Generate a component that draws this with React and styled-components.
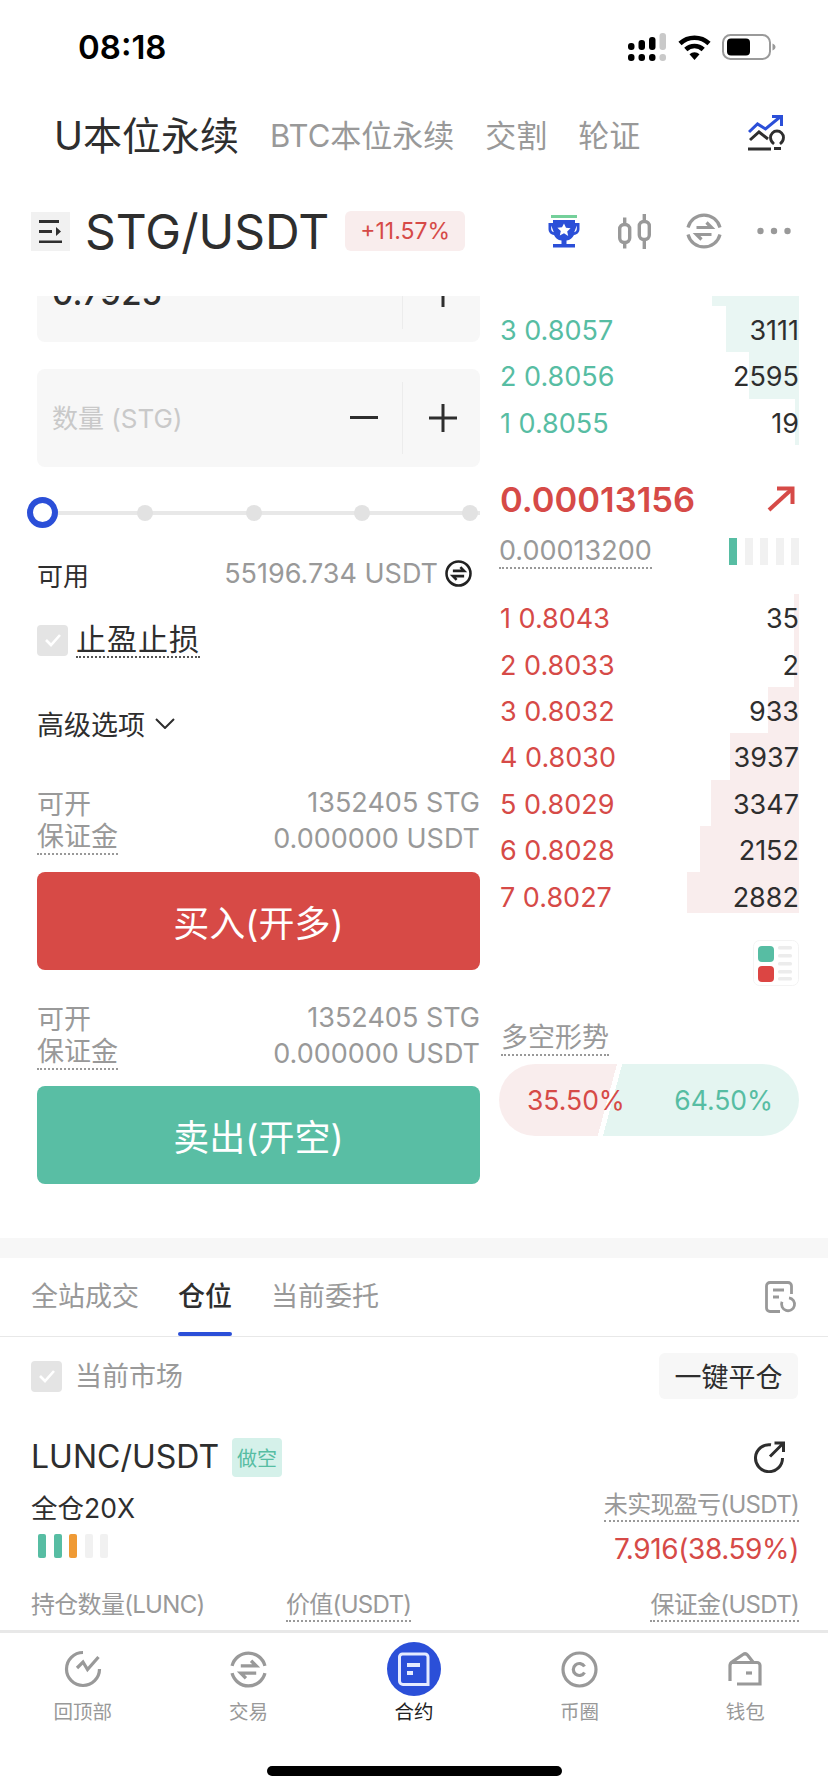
import React from "react";
import styled, { createGlobalStyle } from "styled-components";

const RED = "#d64a47";
const GREEN = "#57bda3";
const BLUE = "#2b4fd8";
const GREY = "#999999";
const DARK = "#2e2e2e";

const GlobalStyle = createGlobalStyle`
  body {
    margin: 0;
    background: #fff;
    font-family: Inter, "Noto Sans CJK SC", sans-serif;
    color: ${DARK};
  }
`;

const Page = styled.div`
  width: 828px;
  height: 1792px;
  display: flex;
  flex-direction: column;
  overflow: hidden;
  background: #fff;
`;

const StatusBar = styled.div`
  height: 94px;
  flex: none;
  display: flex;
  align-items: center;
  justify-content: space-between;
  padding: 0 52px 0 78px;
`;

const Clock = styled.span`
  font-size: 33px;
  font-weight: 600;
  color: #000;
`;

const StatusIcons = styled.div`
  display: flex;
  align-items: center;
  gap: 11px;
`;

const ProductTabs = styled.div`
  height: 78px;
  flex: none;
  display: flex;
  align-items: center;
  padding: 0 42px 0 54px;
`;

const ProductTab = styled.span`
  font-size: ${(p) => (p.$active ? "39px" : "31px")};
  font-weight: 400;
  color: ${(p) => (p.$active ? DARK : GREY)};
  margin-right: 31px;
  white-space: nowrap;
`;

const PushRight = styled.div`
  margin-left: auto;
  display: flex;
  align-items: center;
`;

const MarketBar = styled.div`
  height: 118px;
  margin-bottom: 6px;
  flex: none;
  display: flex;
  align-items: center;
  padding: 0 37px 0 31px;
`;

const MenuButton = styled.div`
  width: 39px;
  height: 39px;
  background: #f1f1f1;
  display: flex;
  align-items: center;
  justify-content: center;
`;

const Pair = styled.span`
  font-size: 48px;
  margin-left: 15px;
  color: ${DARK};
`;

const ChangeBadge = styled.span`
  height: 40px;
  width: 120px;
  margin-left: 16px;
  border-radius: 6px;
  background: #f9eded;
  color: ${RED};
  font-size: 23px;
  display: flex;
  align-items: center;
  justify-content: center;
`;

const MarketActions = styled.div`
  margin-left: auto;
  display: flex;
  align-items: center;
  gap: 35px;
`;

const TrophySlot = styled.span`
  display: flex;
  margin-right: 3px;
`;

const ScrollArea = styled.div`
  flex: 1;
  min-height: 0;
  overflow: hidden;
`;

const TradeGrid = styled.div`
  height: 942px;
  display: grid;
  grid-template-columns: 443px 300px;
  column-gap: 19px;
  padding-left: 37px;
`;

const OrderForm = styled.div`
  margin-top: -52px;
  display: flex;
  flex-direction: column;
`;

const InputBox = styled.div`
  height: 98px;
  flex: none;
  margin-bottom: ${(p) => (p.$last ? 0 : "27px")};
  display: flex;
  align-items: center;
  background: #f7f7f7;
  border-radius: 8px;
  padding-left: 15px;
`;

const InputText = styled.span`
  flex: 1;
  font-size: ${(p) => (p.$filled ? "33px" : "26px")};
  font-weight: ${(p) => (p.$filled ? 500 : 400)};
  padding-bottom: ${(p) => (p.$filled ? 0 : "3px")};
  color: ${(p) => (p.$filled ? DARK : "#c9c9c9")};
`;

const Stepper = styled.div`
  box-sizing: border-box;
  width: 78px;
  height: 72px;
  padding-left: 2px;
  display: flex;
  align-items: center;
  justify-content: center;
  border-left: ${(p) => (p.$divided ? "1px solid #ececec" : "none")};
`;

const Slider = styled.div`
  position: relative;
  margin: 30px 0 0 -10px;
  display: flex;
  align-items: center;
  gap: 92.3px;
  height: 31px;
  &::before {
    content: "";
    position: absolute;
    left: 16px;
    right: 0;
    top: 14px;
    height: 4px;
    background: #e8e8e8;
  }
`;

const SliderThumb = styled.span`
  position: relative;
  box-sizing: border-box;
  width: 31px;
  height: 31px;
  margin-right: -13px;
  border-radius: 50%;
  border: 6px solid ${BLUE};
  background: #fff;
`;

const SliderStop = styled.span`
  position: relative;
  width: 16px;
  height: 16px;
  border-radius: 50%;
  background: #e2e2e2;
`;

const AvailableRow = styled.div`
  height: 36px;
  margin-top: 27px;
  display: flex;
  align-items: center;
  justify-content: space-between;
`;

const AvailableLabel = styled.span`
  font-size: 26px;
  margin-top: 2px;
  color: ${DARK};
`;

const AvailableValue = styled.span`
  font-size: 27px;
  color: ${GREY};
  display: flex;
  align-items: center;
  gap: 7px;
  padding-right: 8px;
`;

const CheckRow = styled.div`
  display: flex;
  align-items: center;
  gap: ${(p) => p.$gap}px;
  margin-top: ${(p) => p.$top}px;
`;

const CheckBox = styled.span`
  width: 31px;
  height: 31px;
  border-radius: 4px;
  background: #e4e4e4;
  display: flex;
  align-items: center;
  justify-content: center;
`;

const StopLabel = styled.span`
  font-size: 30px;
  line-height: 34px;
  letter-spacing: 1px;
  border-bottom: 2px dotted #555;
  color: ${DARK};
`;

const AdvancedRow = styled.div`
  height: 36px;
  margin-top: 47px;
  display: flex;
  align-items: center;
  gap: 10px;
  font-size: 27px;
  color: ${DARK};
`;

const StatGroup = styled.div`
  margin: ${(p) => p.$top}px 0 ${(p) => p.$bottom}px;
`;

const StatRow = styled.div`
  height: 36px;
  display: flex;
  align-items: center;
  justify-content: space-between;
  font-size: 27px;
  color: ${GREY};
`;

const DottedLabel = styled.span`
  display: inline-block;
  line-height: ${(p) => p.$line || 32}px;
  border-bottom: 2px dotted ${(p) => (p.$plain ? "transparent" : GREY)};
`;

const ActionButton = styled.div`
  height: 98px;
  flex: none;
  border-radius: 8px;
  background: ${(p) => (p.$sell ? "#59bea4" : "#d74a46")};
  color: #fff;
  font-size: 36px;
  display: flex;
  align-items: center;
  justify-content: center;
`;

const BookColumn = styled.div`
  display: flex;
  flex-direction: column;
`;

const Levels = styled.div`
  height: ${(p) => p.$height}px;
  flex: none;
  overflow: hidden;
  display: flex;
  flex-direction: column;
  justify-content: ${(p) => (p.$bottom ? "flex-end" : "flex-start")};
`;

const Level = styled.div`
  position: relative;
  box-sizing: border-box;
  height: 46.4px;
  flex: none;
  display: flex;
  align-items: center;
  justify-content: space-between;
  font-size: 27px;
  padding: 3px 0 0 1px;
`;

const DepthBar = styled.span`
  position: absolute;
  top: 0;
  bottom: 0;
  right: 0;
  background: ${(p) => (p.$bid ? "#e9f6f3" : "#f9eded")};
`;

const LevelPrice = styled.span`
  position: relative;
  white-space: pre;
  color: ${(p) => (p.$bid ? GREEN : RED)};
`;

const LevelSize = styled.span`
  position: relative;
  color: ${DARK};
`;

const MidRow = styled.div`
  height: 44px;
  margin-top: 32px;
  padding: 0 4px 0 1px;
  display: flex;
  align-items: center;
  justify-content: space-between;
  font-size: 34.5px;
  font-weight: 600;
  color: ${RED};
`;

const MarkRow = styled.div`
  height: 35px;
  margin: 13px 0 25px;
  display: flex;
  align-items: center;
  justify-content: space-between;
  font-size: 27px;
  color: ${GREY};
`;

const RiskBars = styled.div`
  display: flex;
  gap: 7.5px;
  margin: ${(p) => p.$margin || 0};
`;

const RiskBar = styled.span`
  width: 8px;
  height: ${(p) => p.$height || 27}px;
  border-radius: ${(p) => (p.$round ? "2px" : 0)};
  background: ${(p) => p.$color || "#f1f1f1"};
`;

const LayoutToggle = styled.div`
  align-self: flex-end;
  margin-top: 27px;
  width: 46px;
  height: 46px;
`;

const SentimentTitle = styled.div`
  margin-top: 35px;
  padding-left: 2px;
  font-size: 27px;
  color: ${GREY};
`;

const SentimentPill = styled.div`
  margin-top: 8px;
  height: 72px;
  padding: 0 26px 0 28px;
  border-radius: 36px;
  display: flex;
  align-items: center;
  justify-content: space-between;
  font-size: 26.5px;
  background: linear-gradient(105deg, #f9eded 114px, #fff 114px, #fff 119px, #e4f5f1 119px);
`;

const SentimentValue = styled.span`
  color: ${(p) => (p.$long ? GREEN : RED)};
`;

const Divider = styled.div`
  height: 20px;
  background: #f7f7f7;
`;

const PositionTabs = styled.div`
  height: 78px;
  box-sizing: content-box;
  padding: 0 31px 0 31px;
  border-bottom: 1px solid #e8e8e8;
  display: flex;
  align-items: center;
  gap: 39px;
`;

const PositionTab = styled.span`
  position: relative;
  line-height: 78px;
  font-size: 27px;
  font-weight: ${(p) => (p.$active ? 500 : 400)};
  color: ${(p) => (p.$active ? DARK : GREY)};
  &::after {
    content: "";
    display: ${(p) => (p.$active ? "block" : "none")};
    position: absolute;
    left: 0;
    right: 0;
    bottom: 0;
    height: 4px;
    border-radius: 2px;
    background: ${BLUE};
  }
`;

const FilterRow = styled.div`
  margin-top: 16px;
  padding: 0 30px 0 31px;
  display: flex;
  align-items: center;
  justify-content: space-between;
`;

const FilterLabel = styled.span`
  font-size: 27px;
  padding-bottom: 3px;
  color: ${GREY};
`;

const CloseAll = styled.div`
  width: 139px;
  height: 46px;
  border-radius: 6px;
  background: #f7f7f7;
  font-size: 27px;
  padding-bottom: 1px;
  box-sizing: border-box;
  color: ${DARK};
  display: flex;
  align-items: center;
  justify-content: center;
`;

const PositionHead = styled.div`
  height: 40px;
  margin-top: 38px;
  padding: 0 43px 0 31px;
  display: flex;
  align-items: center;
  gap: 13px;
`;

const Symbol = styled.span`
  font-size: 32px;
  padding-bottom: 1px;
  color: ${DARK};
`;

const SideBadge = styled.span`
  width: 50px;
  height: 39px;
  border-radius: 4px;
  background: #d5f1ea;
  color: ${GREEN};
  font-size: 20px;
  display: flex;
  align-items: center;
  justify-content: center;
`;

const PositionMeta = styled.div`
  margin-top: 12px;
  padding: 0 29px 0 31px;
  display: flex;
  justify-content: space-between;
`;

const Leverage = styled.div`
  font-size: 26.5px;
  line-height: 36px;
  margin-top: 1px;
  color: ${DARK};
`;

const MetaRight = styled.div`
  text-align: right;
  font-size: 24px;
  letter-spacing: -0.7px;
  color: ${GREY};
`;

const Pnl = styled.div`
  font-size: 28px;
  letter-spacing: -0.4px;
  line-height: 36px;
  margin-top: 9px;
  color: ${RED};
`;

const MetricHeads = styled.div`
  margin-top: 22px;
  padding: 0 29px 0 31px;
  display: grid;
  grid-template-columns: 255px 1fr auto;
  font-size: 24px;
  letter-spacing: -0.7px;
  color: ${GREY};
`;

const BottomNav = styled.div`
  flex: none;
  height: 162px;
  box-sizing: border-box;
  border-top: 3px solid #e8e8e8;
  background: #fff;
  display: flex;
  flex-direction: column;
`;

const NavItems = styled.div`
  display: grid;
  grid-template-columns: repeat(5, 1fr);
  padding-top: 9px;
`;

const NavItem = styled.div`
  display: flex;
  flex-direction: column;
  align-items: center;
  font-size: 19.5px;
  line-height: 24px;
  color: ${(p) => (p.$active ? "#222" : GREY)};
`;

const NavIcon = styled.div`
  height: 54px;
  margin-bottom: 4px;
  display: flex;
  align-items: center;
  justify-content: center;
`;

const HomeBar = styled.div`
  width: 295px;
  height: 10px;
  margin: 42px auto 0;
  border-radius: 5px;
  background: #000;
`;

const SignalIcon = () => (
  <svg width="39" height="28" viewBox="0 0 39 28">
    <g fill="#000">
      <rect x="0" y="10" width="6.5" height="7" rx="3" />
      <rect x="10.5" y="7" width="6.5" height="10" rx="3" />
      <rect x="21" y="4" width="6.5" height="13" rx="3" />
      <rect x="0" y="21" width="6.5" height="7" rx="3" />
      <rect x="10.5" y="21" width="6.5" height="7" rx="3" />
      <rect x="21" y="21" width="6.5" height="7" rx="3" />
    </g>
    <g fill="#c9c9c9">
      <rect x="31.5" y="0" width="6.5" height="17" rx="3" />
      <rect x="31.5" y="21" width="6.5" height="7" rx="3" />
    </g>
  </svg>
);

const WifiIcon = () => (
  <svg width="33" height="26" viewBox="0 0 33 26">
    <g fill="none" stroke="#000" strokeWidth="4.6">
      <path d="M2 9.5a21 21 0 0 1 29 0" />
      <path d="M7.8 15.5a12.6 12.6 0 0 1 17.4 0" />
    </g>
    <path d="M11.5 20.2a7.4 7.4 0 0 1 10 0L16.5 26z" fill="#000" />
  </svg>
);

const BatteryIcon = () => (
  <svg width="54" height="26" viewBox="0 0 54 26">
    <rect x="1" y="1" width="47" height="24" rx="7.5" fill="none" stroke="#9a9a9a" strokeWidth="2" />
    <rect x="5" y="4.5" width="23" height="17" rx="4" fill="#000" />
    <path d="M50.5 9.5c2 .8 3 2 3 3.5s-1 2.7-3 3.5z" fill="#9a9a9a" />
  </svg>
);

const AnalysisIcon = () => (
  <svg width="38" height="36" viewBox="0 0 38 36" fill="none">
    <path d="M1 17l8.500-8 8 5L32 2" stroke={BLUE} strokeWidth="3" />
    <path d="M24 1.500h9.500V11" stroke={BLUE} strokeWidth="3" />
    <path d="M2 25l9-8 9 7" stroke={DARK} strokeWidth="3" />
    <path d="M0 34h23M26 33.500h7" stroke={DARK} strokeWidth="3" />
    <path d="M26 29c-2-1.500-3.500-3.500-3.500-6.500a6.500 6.500 0 0 1 13 0c0 3-1.500 5-3.500 6.500" stroke={DARK} strokeWidth="2.800" />
  </svg>
);

const MenuIcon = () => (
  <svg width="23" height="23" viewBox="0 0 23 23" fill="none" stroke={DARK} strokeWidth="3">
    <path d="M0 1.500h20M0 22h23M0 11.500h13" />
    <path d="M17 7l5 4.500-5 4.500z" fill={DARK} stroke="none" />
  </svg>
);

const TrophyIcon = () => (
  <svg width="32" height="33" viewBox="0 0 32 33">
    <rect x="3" y="0" width="26" height="3" fill="#74d09a" />
    <path d="M5 5h22v3h4.500v6c0 3-2 5.500-5.500 6-1.500 3-4 5-7.500 5.600V29h-5v-3.400C9.800 25 7.200 23 6 20c-3.500-.5-5.500-3-5.500-6V8H5zM3.200 10.500V14c0 1.500 1 3 2.600 3.300zM28.800 10.500V14c0 1.500-1 3-2.600 3.300z" fill={BLUE} fillRule="evenodd" />
    <path d="M16 8.500l2 4.300 4.600.5-3.400 3.100 1 4.600L16 18.200l-4.200 2.300 1-4.600-3.400-3.100 4.600-.5z" fill="#fff" />
    <rect x="5" y="29" width="22" height="3.500" fill={BLUE} />
  </svg>
);

const CandlesIcon = () => (
  <svg width="33" height="35" viewBox="0 0 33 35" fill="none" stroke={GREY} strokeWidth="3.400">
    <rect x="1.700" y="10.500" width="10" height="18" rx="4.500" />
    <path d="M6.700 3.500v7M6.700 28.500v6" />
    <rect x="21.300" y="7.500" width="10" height="18" rx="4.500" />
    <path d="M26.300 0v7.500M26.300 25.500V35" />
  </svg>
);

const SwapIcon = ({ size = 36, color = GREY, full, stroke = 3.2 }) => (
  <svg width={size} height={size} viewBox="0 0 36 36" fill="none" stroke={color} strokeWidth={stroke}>
    {full ? (
      <circle cx="18" cy="18" r="16" />
    ) : (
      <path d="M2 14.500a16.500 16.500 0 0 1 32 0M2 21.500a16.500 16.500 0 0 0 32 0" />
    )}
    <path d="M10.500 14.500h15l-5-5M25.500 21.500h-15l5 5" />
  </svg>
);

const Dots = () => (
  <svg width="34" height="8" viewBox="0 0 34 8" fill={GREY}>
    <circle cx="3.500" cy="4" r="3.200" />
    <circle cx="17" cy="4" r="3.200" />
    <circle cx="30.500" cy="4" r="3.200" />
  </svg>
);

const Minus = () => (
  <svg width="28" height="4" viewBox="0 0 28 4">
    <rect width="28" height="3" fill={DARK} />
  </svg>
);

const Plus = () => (
  <svg width="28" height="28" viewBox="0 0 28 28" fill={DARK}>
    <rect y="12.500" width="28" height="3" />
    <rect x="12.500" width="3" height="28" />
  </svg>
);

const Check = ({ size = 20 }) => (
  <svg width={size} height={size} viewBox="0 0 20 20" fill="none" stroke="#fff" strokeWidth="2.600">
    <path d="M3 10l5 5 9-10" />
  </svg>
);

const Chevron = () => (
  <svg width="20" height="11" viewBox="0 0 20 11" fill="none" stroke={DARK} strokeWidth="2">
    <path d="M1 1l9 9 9-9" />
  </svg>
);

const UpArrow = () => (
  <svg width="28" height="26" viewBox="0 0 28 26" fill="none" stroke={RED} strokeWidth="4">
    <path d="M2 24L25 3" />
    <path d="M10 2.500h15.500V18" />
  </svg>
);

const LayoutIcon = () => (
  <svg width="46" height="46" viewBox="0 0 46 46">
    <rect x="0.500" y="0.500" width="45" height="45" rx="6" fill="#fff" stroke="#f3f3f3" />
    <rect x="5" y="6" width="16" height="16" rx="4" fill={GREEN} />
    <rect x="5" y="26" width="16" height="16" rx="4" fill="#dc4543" />
    <g fill="#ececec">
      <rect x="25" y="6" width="14" height="3.500" rx="1.500" />
      <rect x="25" y="14" width="14" height="3.500" rx="1.500" />
      <rect x="25" y="22" width="14" height="3.500" rx="1.500" />
      <rect x="25" y="30" width="14" height="3.500" rx="1.500" />
      <rect x="25" y="37" width="14" height="3.500" rx="1.500" />
    </g>
  </svg>
);

const RecordsIcon = () => (
  <svg width="32" height="32" viewBox="0 0 32 32" fill="none" stroke={GREY} strokeWidth="2.800">
    <path d="M15 30.500H5a3.500 3.500 0 0 1-3.500-3.500V5A3.500 3.500 0 0 1 5 1.500h18A3.500 3.500 0 0 1 26.500 5v8" />
    <path d="M8 9h11M8 16h6" />
    <path d="M24 16.800a6.500 6.500 0 1 1-7 4" />
  </svg>
);

const ShareIcon = () => (
  <svg width="32" height="32" viewBox="0 0 32 32" fill="none" stroke={DARK} strokeWidth="3">
    <path d="M18 3.800A13.500 13.500 0 1 0 29.500 17" />
    <path d="M17 15.500L30 2.500M21.500 2h9v9" />
  </svg>
);

const TrendIcon = () => (
  <svg width="38" height="38" viewBox="0 0 38 38" fill="none" stroke={GREY} strokeWidth="3.200">
    <path d="M19 2.500A16.500 16.500 0 1 0 35.500 19" />
    <path d="M13 18l6-6 4.500 7.500L34.500 7" />
  </svg>
);

const ContractIcon = () => (
  <svg width="54" height="54" viewBox="0 0 54 54" fill="none">
    <circle cx="27" cy="27" r="27" fill={BLUE} />
    <path d="M17 12h21a3 3 0 0 1 3 3v27.500H16a3.500 3.500 0 0 1-3.500-3.500V15a3 3 0 0 1 3-3z" stroke="#e6ebff" strokeWidth="3" />
    <path d="M20 23h13M20 31h6" stroke="#e6ebff" strokeWidth="4" />
  </svg>
);

const CoinIcon = () => (
  <svg width="37" height="37" viewBox="0 0 37 37" fill="none" stroke={GREY} strokeWidth="3.200">
    <circle cx="18.500" cy="18.500" r="16.500" />
    <path d="M23.500 15.500a6 6 0 1 0 0 6" />
  </svg>
);

const WalletIcon = () => (
  <svg width="36" height="37" viewBox="0 0 36 37" fill="none" stroke={GREY} strokeWidth="3.200">
    <path d="M3 30V14.500c0-2 1-3 2.500-3.900L16 3.500c1.800-1.200 3.200-1 4.500.5L26 11" />
    <path d="M5 11.500h25a3 3 0 0 1 3 3V33H10" />
    <path d="M19 22h6" />
  </svg>
);

const bids = [
  { label: "", size: "", width: 87 },
  { label: "3 0.8057", size: "3111", width: 73 },
  { label: "2 0.8056", size: "2595", width: 50 },
  { label: "1 0.8055", size: "19", width: 4 },
];

const asks = [
  { label: "1 0.8043", size: "35", width: 5 },
  { label: "2 0.8033", size: "2", width: 5 },
  { label: "3 0.8032", size: "933", width: 31 },
  { label: "4 0.8030", size: "3937", width: 69 },
  { label: "5 0.8029", size: "3347", width: 88 },
  { label: "6 0.8028", size: "2152", width: 99 },
  { label: "7 0.8027", size: "2882", width: 112 },
];

const navLinks = [
  { label: "回顶部", icon: <TrendIcon /> },
  { label: "交易", icon: <SwapIcon size={37} /> },
  { label: "合约", icon: <ContractIcon />, active: true },
  { label: "币圈", icon: <CoinIcon /> },
  { label: "钱包", icon: <WalletIcon /> },
];

const Stats = ({ top, bottom }) => (
  <StatGroup $top={top} $bottom={bottom}>
    <StatRow>
      <span>可开</span>
      <span>1352405 STG</span>
    </StatRow>
    <StatRow>
      <DottedLabel>保证金</DottedLabel>
      <span>0.000000 USDT</span>
    </StatRow>
  </StatGroup>
);

const Book = ({ rows, bid }) =>
  rows.map((row, i) => (
    <Level key={i}>
      <DepthBar $bid={bid} style={{ width: row.width }} />
      <LevelPrice $bid={bid}>{row.label}</LevelPrice>
      <LevelSize>{row.size}</LevelSize>
    </Level>
  ));

export default function App() {
  return (
    <Page>
      <GlobalStyle />
      <StatusBar>
        <Clock>08:18</Clock>
        <StatusIcons>
          <SignalIcon />
          <WifiIcon />
          <BatteryIcon />
        </StatusIcons>
      </StatusBar>

      <ProductTabs>
        <ProductTab $active>U本位永续</ProductTab>
        <ProductTab>BTC本位永续</ProductTab>
        <ProductTab>交割</ProductTab>
        <ProductTab>轮证</ProductTab>
        <PushRight>
          <AnalysisIcon />
        </PushRight>
      </ProductTabs>

      <MarketBar>
        <MenuButton>
          <MenuIcon />
        </MenuButton>
        <Pair>STG/USDT</Pair>
        <ChangeBadge>+11.57%</ChangeBadge>
        <MarketActions>
          <TrophySlot>
            <TrophyIcon />
          </TrophySlot>
          <CandlesIcon />
          <SwapIcon />
          <Dots />
        </MarketActions>
      </MarketBar>

      <ScrollArea>
        <TradeGrid>
          <OrderForm>
            <InputBox>
              <InputText $filled>0.7925</InputText>
              <Stepper />
              <Stepper $divided>
                <Plus />
              </Stepper>
            </InputBox>
            <InputBox $last>
              <InputText>数量 (STG)</InputText>
              <Stepper>
                <Minus />
              </Stepper>
              <Stepper $divided>
                <Plus />
              </Stepper>
            </InputBox>
            <Slider>
              <SliderThumb />
              <SliderStop />
              <SliderStop />
              <SliderStop />
              <SliderStop />
            </Slider>
            <AvailableRow>
              <AvailableLabel>可用</AvailableLabel>
              <AvailableValue>
                55196.734 USDT
                <SwapIcon size={27} color="#222" full stroke={3.4} />
              </AvailableValue>
            </AvailableRow>
            <CheckRow $gap={8} $top={31}>
              <CheckBox>
                <Check />
              </CheckBox>
              <StopLabel>止盈止损</StopLabel>
            </CheckRow>
            <AdvancedRow>
              高级选项
              <Chevron />
            </AdvancedRow>
            <Stats top={43} bottom={16} />
            <ActionButton>买入(开多)</ActionButton>
            <Stats top={29} bottom={15} />
            <ActionButton $sell>卖出(开空)</ActionButton>
          </OrderForm>

          <BookColumn>
            <Levels $height={149} $bottom>
              <Book rows={bids} bid />
            </Levels>
            <MidRow>
              0.00013156
              <UpArrow />
            </MidRow>
            <MarkRow>
              <DottedLabel $line={33}>0.00013200</DottedLabel>
              <RiskBars>
                <RiskBar $color={GREEN} />
                <RiskBar />
                <RiskBar />
                <RiskBar />
                <RiskBar />
              </RiskBars>
            </MarkRow>
            <Levels $height={319}>
              <Book rows={asks} />
            </Levels>
            <LayoutToggle>
              <LayoutIcon />
            </LayoutToggle>
            <SentimentTitle>
              <DottedLabel $line={33}>多空形势</DottedLabel>
            </SentimentTitle>
            <SentimentPill>
              <SentimentValue>35.50%</SentimentValue>
              <SentimentValue $long>64.50%</SentimentValue>
            </SentimentPill>
          </BookColumn>
        </TradeGrid>

        <Divider />

        <PositionTabs>
          <PositionTab>全站成交</PositionTab>
          <PositionTab $active>仓位</PositionTab>
          <PositionTab>当前委托</PositionTab>
          <PushRight>
            <RecordsIcon />
          </PushRight>
        </PositionTabs>

        <FilterRow>
          <CheckRow $gap={13} $top={0}>
            <CheckBox>
              <Check />
            </CheckBox>
            <FilterLabel>当前市场</FilterLabel>
          </CheckRow>
          <CloseAll>一键平仓</CloseAll>
        </FilterRow>

        <PositionHead>
          <Symbol>LUNC/USDT</Symbol>
          <SideBadge>做空</SideBadge>
          <PushRight>
            <ShareIcon />
          </PushRight>
        </PositionHead>

        <PositionMeta>
          <div>
            <Leverage>全仓20X</Leverage>
            <RiskBars $margin="8px 0 0 7px">
              <RiskBar $height={24} $round $color={GREEN} />
              <RiskBar $height={24} $round $color={GREEN} />
              <RiskBar $height={24} $round $color="#ef9a35" />
              <RiskBar $height={24} $round />
              <RiskBar $height={24} $round />
            </RiskBars>
          </div>
          <MetaRight>
            <DottedLabel $line={31}>未实现盈亏(USDT)</DottedLabel>
            <Pnl>7.916(38.59%)</Pnl>
          </MetaRight>
        </PositionMeta>

        <MetricHeads>
          <DottedLabel $line={31} $plain>
            持仓数量(LUNC)
          </DottedLabel>
          <span>
            <DottedLabel $line={31}>价值(USDT)</DottedLabel>
          </span>
          <DottedLabel $line={31}>保证金(USDT)</DottedLabel>
        </MetricHeads>
      </ScrollArea>

      <BottomNav>
        <NavItems>
          {navLinks.map((link) => (
            <NavItem key={link.label} $active={link.active}>
              <NavIcon>{link.icon}</NavIcon>
              {link.label}
            </NavItem>
          ))}
        </NavItems>
        <HomeBar />
      </BottomNav>
    </Page>
  );
}
